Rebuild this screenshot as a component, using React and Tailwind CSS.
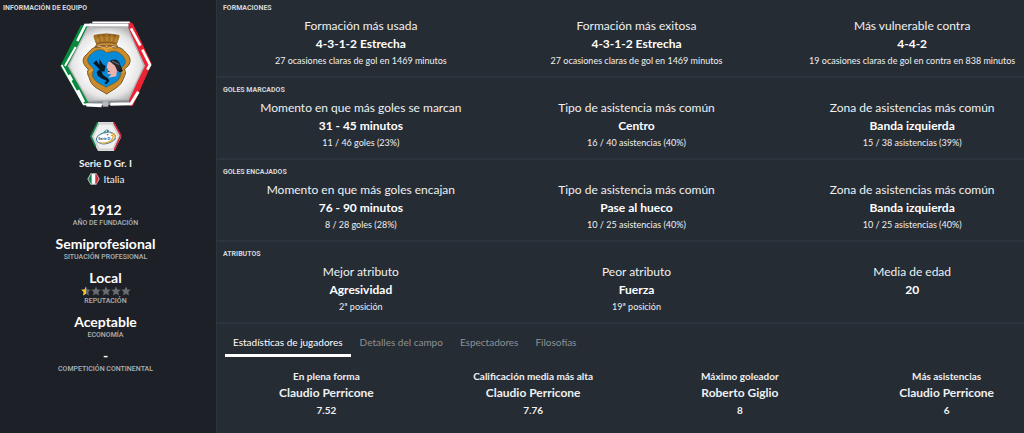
import { useState } from "react";

const sections = [
  {
    title: "FORMACIONES",
    items: [
      ["Formación más usada", "4-3-1-2 Estrecha", "27 ocasiones claras de gol en 1469 minutos"],
      ["Formación más exitosa", "4-3-1-2 Estrecha", "27 ocasiones claras de gol en 1469 minutos"],
      ["Más vulnerable contra", "4-4-2", "19 ocasiones claras de gol en contra en 838 minutos"],
    ],
  },
  {
    title: "GOLES MARCADOS",
    items: [
      ["Momento en que más goles se marcan", "31 - 45 minutos", "11 / 46 goles (23%)"],
      ["Tipo de asistencia más común", "Centro", "16 / 40 asistencias (40%)"],
      ["Zona de asistencias más común", "Banda izquierda", "15 / 38 asistencias (39%)"],
    ],
  },
  {
    title: "GOLES ENCAJADOS",
    items: [
      ["Momento en que más goles encajan", "76 - 90 minutos", "8 / 28 goles (28%)"],
      ["Tipo de asistencia más común", "Pase al hueco", "10 / 25 asistencias (40%)"],
      ["Zona de asistencias más común", "Banda izquierda", "10 / 25 asistencias (40%)"],
    ],
  },
  {
    title: "ATRIBUTOS",
    items: [
      ["Mejor atributo", "Agresividad", "2ª posición"],
      ["Peor atributo", "Fuerza", "19ª posición"],
      ["Media de edad", "20", ""],
    ],
  },
];

const tabs = ["Estadísticas de jugadores", "Detalles del campo", "Espectadores", "Filosofías"];

const playerStats = [
  ["En plena forma", "Claudio Perricone", "7.52"],
  ["Calificación media más alta", "Claudio Perricone", "7.76"],
  ["Máximo goleador", "Roberto Giglio", "8"],
  ["Más asistencias", "Claudio Perricone", "6"],
];

function Crest() {
  return (
    <svg viewBox="0 0 330 300" className="h-[100px] w-[110px]" role="img" aria-label="Escudo del equipo">
      <defs>
        <radialGradient id="plate" cx="50%" cy="50%" r="55%">
          <stop offset="0.45" stopColor="#ffffff" />
          <stop offset="0.8" stopColor="#e6e6e6" />
          <stop offset="1" stopColor="#b4b4b4" />
        </radialGradient>
      </defs>
      <path d="M100 26H236L292 152L240 270H102L40 153Z" fill="#85898c" />
      <path d="M90 30L114 36L54 153L114 262L96 270L28 153Z" fill="#078a3d" />
      <path d="M233 19L246 26L302 146L246 272H234V254L278 152L233 50Z" fill="#ec2333" />
      <path d="M110 38H229L280 152L232 254L112 258L52 153Z" fill="url(#plate)" stroke="#b3b6b8" strokeWidth="4" />
      <g fill="none" stroke="#fff">
        <path d="M79 78L103 30H120" strokeWidth="8" />
        <path d="M116 30H232" strokeWidth="9" />
        <path d="M124 22H236" strokeWidth="5" />
        <path d="M240 40L268 92" strokeWidth="8" />
        <path d="M274 104L297 150L289 164" strokeWidth="8" />
        <path d="M74 96L42 153" strokeWidth="6" />
        <path d="M32 150L98 268H154" strokeWidth="5" />
        <path d="M53 180L62 197M80 226L98 262" strokeWidth="10" />
        <path d="M106 270L152 272" strokeWidth="9" />
        <path d="M178 268L240 266L262 230" strokeWidth="9" />
      </g>
      <path d="M155 259H172V275H155Z" fill="#b9b9b9" />
      <path d="M128 60Q166 51 205 60L197 88L203 97Q166 88 130 97L136 88Z" fill="#8a5c20" />
      <path d="M127 64L136 59L142 68L150 56L159 66L167 55L175 66L183 56L191 68L198 59L206 64L199 84Q166 76 134 84Z" fill="#a87528" />
      <path d="M138 70L141 82M153 66L154 79M168 65V78M183 66L181 79M196 70L193 82" stroke="#c08a38" strokeWidth="5" />
      <path d="M138 91Q166 83 197 91" fill="none" stroke="#d0953f" strokeWidth="4" />
      <path d="M166 97C158 87 151 101 137 97C123 96 117 109 102 123C91 136 98 151 112 163C105 176 115 185 117 196C126 218 144 222 167 237C190 221 209 214 216 194C221 182 227 174 220 162C239 151 242 134 231 120C220 108 212 95 197 98C183 102 175 86 166 97Z" fill="#ca8c2b" stroke="#7c5520" strokeWidth="3" />
      <path d="M165 112C150 98 132 106 125 113C111 124 107 132 112 144C116 152 125 154 128 165C123 175 122 183 129 191C140 207 153 208 166 217C183 206 197 205 205 190C212 178 210 174 209 163C217 153 226 148 222 133C215 120 201 107 186 109C176 110 172 116 165 112Z" fill="#078bd8" stroke="#76501d" strokeWidth="2" />
      <path d="M150 100Q160 93 166 106Q174 93 184 100M113 172L126 163M220 172L207 163" fill="none" stroke="#e3a642" strokeWidth="5" />
      <g fill="#0a1725">
        <path d="M127 145L136 136L145 150L145 131L155 148L164 153L160 170L149 168L141 158Z" />
        <path d="M137 174Q140 160 151 167L156 180L172 191L175 199L165 208L160 203L168 198L153 191L141 183Z" />
        <path d="M178 137Q193 129 204 141L213 162L216 169L205 172L193 157L183 146Z" />
      </g>
      <path d="M171 142L183 137L190 148L199 153L196 184L172 188L181 178L170 176L171 163L167 157Z" fill="#edb4ae" />
      <path d="M176 139Q190 130 202 142L211 162L199 168L192 152Z" fill="#25272b" />
      <path d="M171 169L176 170" fill="none" stroke="#28252a" strokeWidth="3" />
      <path d="M183 138L205 149" stroke="#777578" strokeWidth="3" />
    </svg>
  );
}

function LeagueBadge() {
  return (
    <svg viewBox="0 0 96 93" className="h-[31px] w-[32px]" role="img" aria-label="Serie D">
      <path d="M24 3H70L94 47L72 90H24L2 47Z" fill="#d9dadb" />
      <path d="M23 5L3 46L16 75" fill="none" stroke="#158546" strokeWidth="5" />
      <path d="M71 5L92 43L73 87" fill="none" stroke="#d42b38" strokeWidth="5" />
      <path d="M27 9H67L86 47L68 84H28L10 47Z" fill="#f0f0f0" stroke="#c9cbcd" strokeWidth="3" />
      <ellipse cx="48" cy="51" rx="29" ry="17" transform="rotate(-12 48 51)" fill="#fff" stroke="#397baa" strokeWidth="3" />
      <path d="M27 65Q48 70 71 55M62 36Q78 40 75 52" fill="none" stroke="#dfab42" strokeWidth="4" />
      <path d="M39 34L49 26L46 39Z" fill="#459d76" />
      <path d="M49 24L58 29L52 36Z" fill="#347db3" />
      <path d="M49 39L56 38L53 44Z" fill="#d45140" />
      <path d="M63 44Q70 41 69 49L64 57" fill="none" stroke="#e8a33a" strokeWidth="4" />
      <text x="25" y="57" fontFamily="Lato, sans-serif" fontSize="11" fontWeight="900" fill="#204f87">Serie D</text>
    </svg>
  );
}

function ItalyFlag() {
  return (
    <svg viewBox="0 0 39 36" className="h-3 w-[13px]" aria-hidden="true">
      <path d="M11 1H28L38 18L28 35H11L1 18Z" fill="#c8cbcc" />
      <path d="M12 4H15V32H12L4 18Z" fill="#138346" />
      <path d="M14 4H26V32H14Z" fill="#fff" />
      <path d="M25 4H28L35 18L28 32H25Z" fill="#d22c3a" />
    </svg>
  );
}

const starPath = "M12 1L15.4 8.2L23.2 9.2L17.5 14.6L19 22.5L12 18.6L5 22.5L6.5 14.6L0.8 9.2L8.6 8.2Z";

function Stars() {
  return (
    <div className="flex h-[10px] items-center" role="img" aria-label="Media estrella de cinco">
      {[0, 1, 2, 3, 4].map((i) => (
        <svg key={i} viewBox="0 0 24 24" className="size-[10px]">
          <path d={starPath} fill="#686c71" />
          {i === 0 && <path d="M12 1V18.6L5 22.5L6.5 14.6L0.8 9.2L8.6 8.2Z" fill="#fac31b" />}
        </svg>
      ))}
    </div>
  );
}

function Fact({ value, label, children }) {
  return (
    <div className="flex flex-col-reverse items-center">
      <dt className="font-['Roboto',sans-serif] text-[7px] leading-[10px] font-medium text-[#aeb1b5]">{label}</dt>
      <dd className="flex flex-col items-center text-[14px] leading-4 font-bold text-white">
        {value}
        {children}
      </dd>
    </div>
  );
}

export default function App() {
  const [active, setActive] = useState(0);
  return (
    <div className="flex min-h-screen overflow-hidden bg-[#262c34] font-['Lato','Open_Sans',sans-serif] text-[#eff0f1]">
      <aside className="w-[216px] shrink-0 bg-[#1d2127] pr-[5px]">
        <h2 className="px-[3px] pt-[3px] font-['Roboto',sans-serif] text-[7px] leading-[10px] font-bold text-[#d5d7d9]">
          INFORMACIÓN DE EQUIPO
        </h2>
        <div className="flex flex-col items-center pt-0.5">
          <Crest />
          <div className="pt-[6px]">
            <LeagueBadge />
          </div>
          <a href="#serie-d" className="mt-1 text-[10px] leading-[14px] font-bold">Serie D Gr. I</a>
          <a href="#italia" className="mt-0.5 flex items-center gap-1 text-[10px] leading-[14px]">
            <ItalyFlag />
            Italia
          </a>
        </div>
        <dl className="flex flex-col gap-2 pt-4">
          <Fact value="1912" label="AÑO DE FUNDACIÓN" />
          <Fact value="Semiprofesional" label="SITUACIÓN PROFESIONAL" />
          <Fact value="Local" label="REPUTACIÓN">
            <Stars />
          </Fact>
          <Fact value="Aceptable" label="ECONOMÍA" />
          <Fact value="-" label="COMPETICIÓN CONTINENTAL" />
        </dl>
      </aside>

      <main className="-mr-[26px] min-w-0 flex-1 border-l border-[#2c343d]">
        {sections.map((section) => (
          <section
            key={section.title}
            className="border-b-2 border-[#2b333c] pt-[7px] pb-[7px] pl-[6px] first:pt-[3px]"
          >
            <h2 className="font-['Roboto',sans-serif] text-[7px] leading-[10px] font-bold text-[#d5d7d9]">
              {section.title}
            </h2>
            <div className="grid grid-cols-3 pt-1 text-center">
              {section.items.map(([label, value, note]) => (
                <div key={label}>
                  <p className="text-[12px] leading-[18px]">{label}</p>
                  <p className="text-[12px] leading-[18px] font-bold text-white">{value}</p>
                  <p className="text-[9px] leading-4">{note}</p>
                </div>
              ))}
            </div>
          </section>
        ))}

        <div role="tablist" className="flex gap-px pt-[10px] pl-2">
          {tabs.map((tab, i) => (
            <button
              key={tab}
              type="button"
              role="tab"
              aria-selected={active === i}
              onClick={() => setActive(i)}
              className={`border-b-[3px] px-2 pb-1 text-[10px] leading-4 ${
                active === i ? "border-white text-white" : "border-transparent text-[#8d9195]"
              }`}
            >
              {tab}
            </button>
          ))}
        </div>
        <div role="tabpanel" className="grid grid-cols-4 pt-3 pl-[6px] text-center font-bold">
          {playerStats.map(([label, name, value]) => (
            <div key={label}>
              <p className="text-[10px] leading-[14px]">{label}</p>
              <p className="text-[12px] leading-5">{name}</p>
              <p className="text-[10px] leading-[14px]">{value}</p>
            </div>
          ))}
        </div>
      </main>
    </div>
  );
}
